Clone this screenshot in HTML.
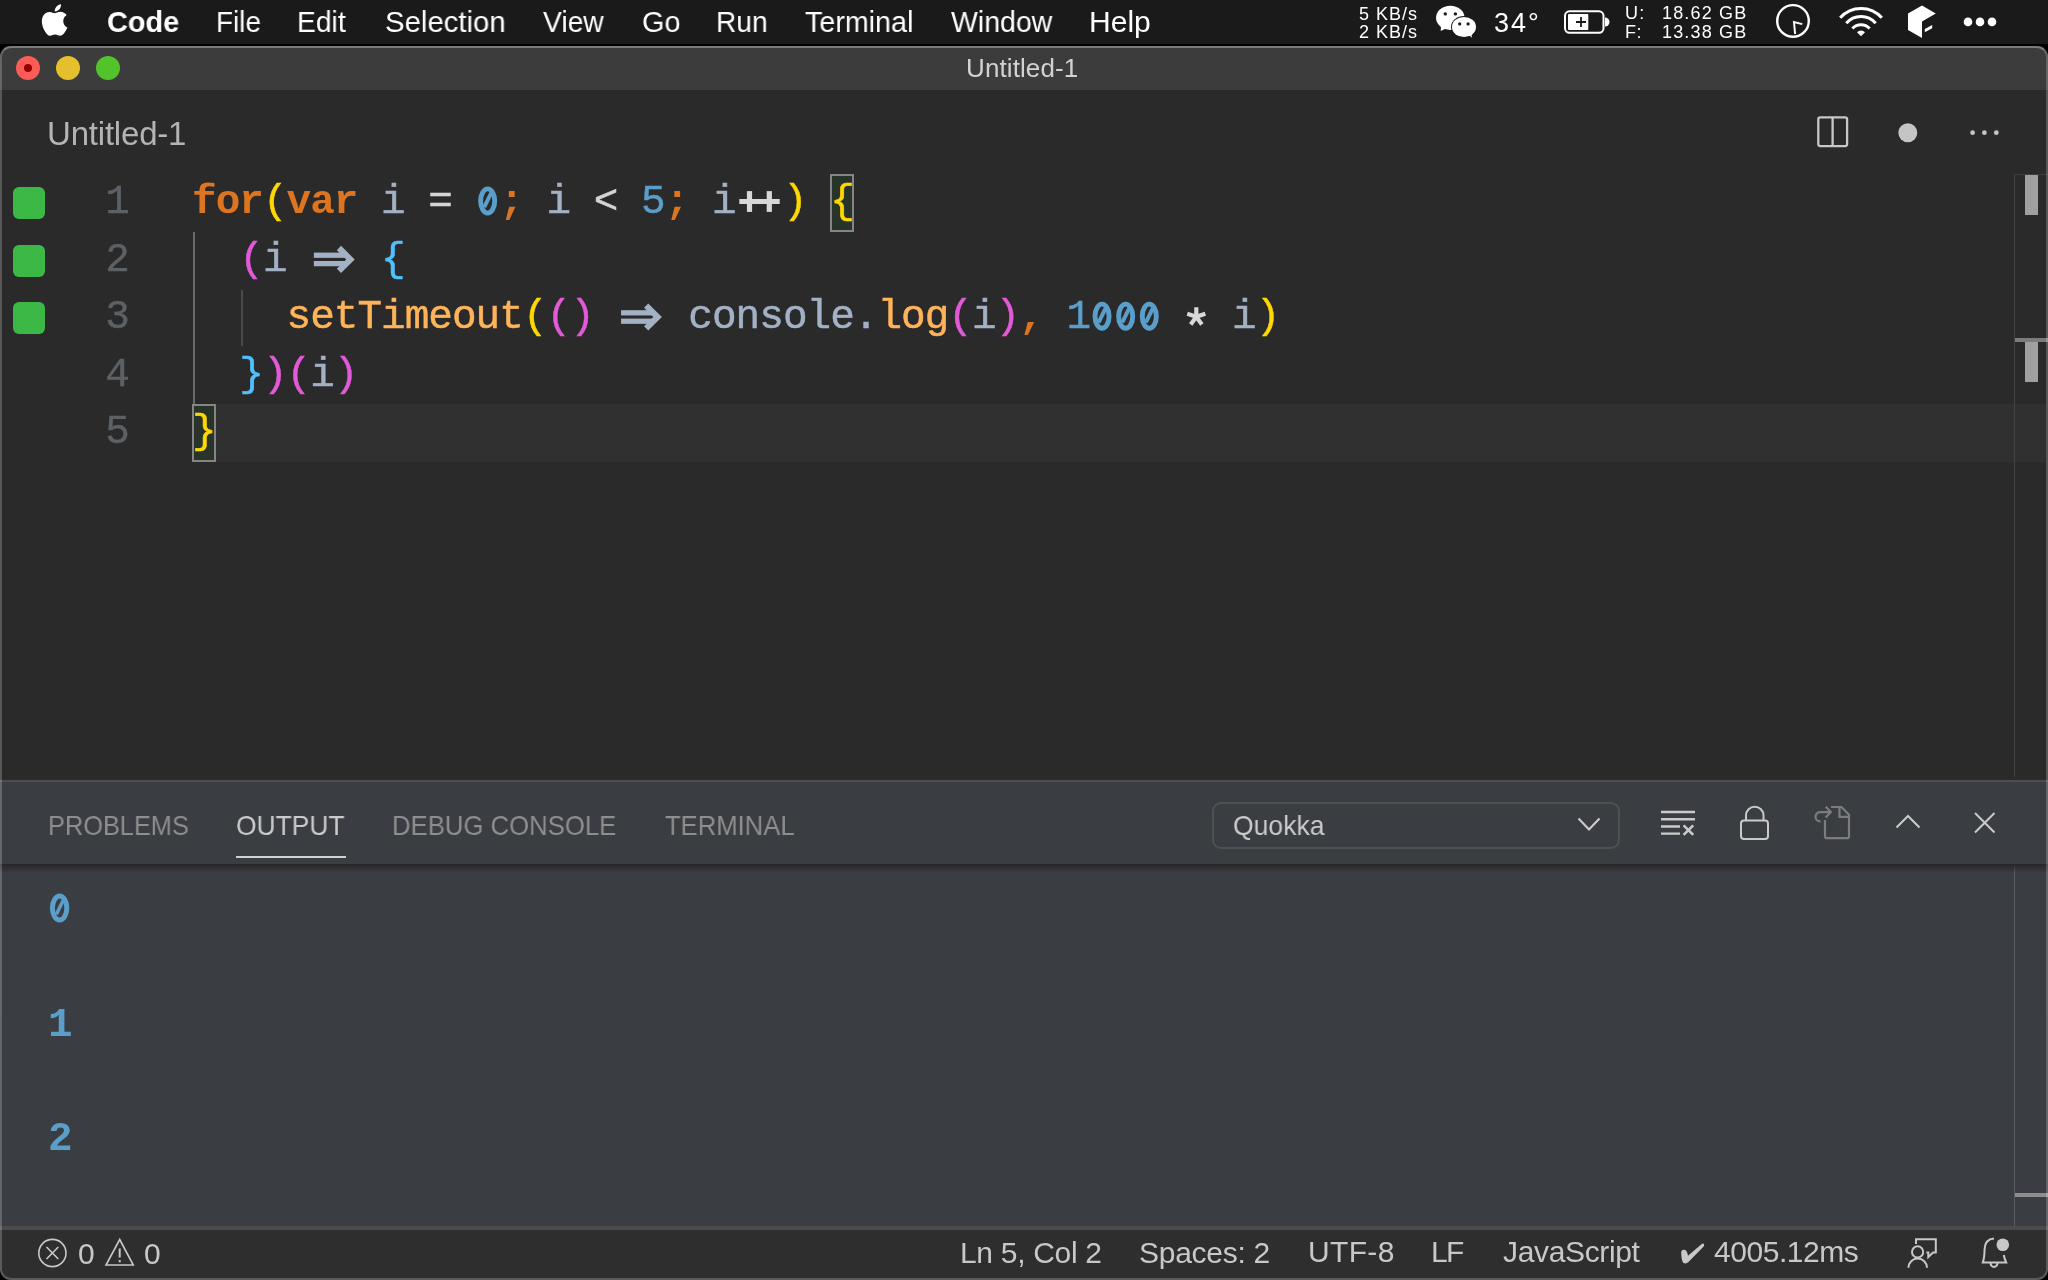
<!DOCTYPE html>
<html><head><meta charset="utf-8">
<style>
html,body{margin:0;padding:0;width:2048px;height:1280px;overflow:hidden;background:#000;}
body{position:relative;font-family:"Liberation Sans",sans-serif;}
.a{position:absolute;}
.t{position:absolute;white-space:pre;line-height:1;will-change:transform;}
#menubar{left:0;top:0;width:2048px;height:44px;background:#1a1a1a;}
.mi{color:#fff;font-size:28px;top:9px;}
.code{will-change:transform;position:absolute;left:192px;font-family:"Liberation Mono",monospace;font-size:41px;letter-spacing:-0.97px;-webkit-text-stroke:0.5px currentColor;line-height:57.6px;height:57.6px;white-space:pre;color:#a3b1c5;}
.ln{will-change:transform;position:absolute;left:59px;width:70px;text-align:right;font-family:"Liberation Mono",monospace;font-size:41px;letter-spacing:-0.97px;-webkit-text-stroke:0.4px currentColor;line-height:57.6px;height:57.6px;color:#5c6166;}
.gs{position:absolute;left:13px;width:32px;height:32px;border-radius:6px;background:#3cb847;}
.k{color:#dd7420;font-weight:bold;-webkit-text-stroke:0}.ast{position:relative;top:8px;font-weight:bold;-webkit-text-stroke:0}.o{font-weight:bold;-webkit-text-stroke:0}.y{color:#ffd702}.m{color:#e35ad9}.c{color:#4fc1ff}.n{color:#5a9ec9}.w{color:#d4d4d4}.f{color:#ffb45a}.o{color:#dd7420}
.ptab{font-size:27px;top:813px;color:#8e8e8e;}
.sb{font-size:28px;top:1241px;color:#c8c8c8;}
.ic{position:absolute;overflow:visible;}
</style></head>
<body>
<div id="menubar" class="a">
  <svg class="ic" style="left:41.3px;top:4px" width="27" height="32" viewBox="0 0 27 32"><path fill="#fff" d="M22.3 17c0-4 3.3-5.9 3.4-6-1.9-2.7-4.8-3.1-5.8-3.1-2.5-.3-4.8 1.4-6.1 1.4-1.3 0-3.2-1.4-5.2-1.3C5.9 8 3.5 9.5 2.2 11.8c-2.8 4.8-.7 12 2 15.9 1.300 1.900 2.900 4.100 4.900 4 2-.1 2.700-1.300 5.100-1.300 2.400 0 3.100 1.300 5.100 1.300 2.100 0 3.500-1.900 4.800-3.900 1.500-2.200 2.100-4.300 2.200-4.400-.1 0-4-1.600-4-6.400zM18.4 5.3c1.1-1.3 1.8-3.2 1.6-5-1.6.1-3.5 1.1-4.6 2.4-1 1.2-1.9 3-1.7 4.8 1.8.1 3.6-.9 4.7-2.2z"/></svg>
  <!-- status items -->
  <svg class="ic" style="left:0;top:0" width="2048" height="44">
    <!-- wechat -->
    <g fill="#fff">
      <ellipse cx="1450.3" cy="17.8" rx="14.3" ry="12.1"/>
      <path d="M1441 26 L1440.7 31 L1447 28 Z"/>
    </g>
    <ellipse cx="1464" cy="27" rx="13" ry="11.1" fill="#1a1a1a"/>
    <g fill="#fff">
      <ellipse cx="1464" cy="27" rx="12" ry="10.1"/>
      <path d="M1469 35 L1471.8 37.8 L1471.5 33 Z"/>
    </g>
    <g fill="#1a1a1a">
      <circle cx="1445.3" cy="13.9" r="1.7"/><circle cx="1455.4" cy="13.9" r="1.7"/>
      <circle cx="1459.7" cy="23.9" r="1.6"/><circle cx="1468.1" cy="23.9" r="1.6"/>
    </g>
    <!-- battery -->
    <rect x="1565" y="11.3" width="38.5" height="21.5" rx="4.5" fill="none" stroke="#fff" stroke-width="2"/>
    <rect x="1568" y="14" width="20.3" height="16" rx="1" fill="#fff"/>
    <path d="M1605 17.5 a4.5 4.5 0 0 1 0 9 z" fill="#fff"/>
    <path d="M1581 17 v10 M1576 22 h10" stroke="#1a1a1a" stroke-width="1.8"/>
    <!-- clock -->
    <circle cx="1793" cy="20.9" r="15.8" fill="none" stroke="#fff" stroke-width="2.4"/>
    <path d="M1802.3 24.1 L1794 22 L1795.1 34" fill="none" stroke="#fff" stroke-width="2"/>
    <!-- wifi -->
    <g fill="none" stroke="#fff" stroke-width="3" stroke-linecap="butt">
      <path d="M1840.2 17.8 A27.8 27.8 0 0 1 1881.8 17.8"/>
      <path d="M1846.3 23.2 A19.5 19.5 0 0 1 1875.7 23.2"/>
      <path d="M1852.4 28.4 A11.7 11.7 0 0 1 1869.6 28.4"/>
    </g>
    <path d="M1857 32.3 A5.5 5.5 0 0 1 1865 32.3 L1861 36.2 Z" fill="#fff"/>
    <!-- box -->
    <path d="M1922 5.6 L1935.8 13.6 L1922 21.5 L1922 38 L1908 30 L1908 13.4 Z" fill="#fff"/>
    <path d="M1924.8 29 L1932.2 25 L1932.2 28.2 L1924.8 32.2 Z" fill="#fff"/>
    <!-- dots -->
    <circle cx="1968" cy="21.9" r="4.3" fill="#fff"/><circle cx="1980" cy="21.9" r="4.3" fill="#fff"/><circle cx="1992" cy="21.9" r="4.3" fill="#fff"/>
  </svg>
</div>

<!-- window -->
<div class="a" style="left:0;top:46px;width:2048px;height:1234px;background:#2a2a2a;border-radius:11px;overflow:hidden">
  <div class="a" style="left:0;top:0;width:2048px;height:44px;background:#3c3c3c"></div>
  <!-- current line highlight -->
  <div class="a" style="left:192px;top:358px;width:1854px;height:58px;background:#303030"></div>
  <!-- overview ruler -->
  <div class="a" style="left:2014px;top:128px;width:1px;height:603px;background:#424242"></div>
  <div class="a" style="left:2025px;top:128px;width:13px;height:41px;background:#a0a0a0"></div>
  <div class="a" style="left:2025px;top:294.5px;width:13px;height:41.5px;background:#a0a0a0"></div>
  <div class="a" style="left:2015px;top:291.5px;width:33px;height:4px;background:#7c7c7c"></div>
  <div class="a" style="left:2014px;top:128px;width:34px;height:1px;background:#3e3e3e"></div>
  <!-- panel -->
  <div class="a" style="left:0;top:734px;width:2048px;height:2px;background:#4d4e50"></div>
  <div class="a" style="left:0;top:736px;width:2048px;height:444px;background:#3a3d41"></div>
  <div class="a" style="left:2014px;top:818px;width:1px;height:362px;background:#5a5d61"></div>
  <div class="a" style="left:0;top:818px;width:2048px;height:9px;background:linear-gradient(#262626,rgba(58,61,65,0))"></div>
  <div class="a" style="left:2015px;top:1147px;width:33px;height:4px;background:#8e8e8e"></div>
  <div class="a" style="left:0;top:1180px;width:2048px;height:4px;background:#4b4b4b"></div>
  <div class="a" style="left:0;top:1184px;width:2048px;height:50px;background:#2e2e2e"></div>
</div>
<!-- window border -->
<div class="a" style="left:0;top:46px;width:2044px;height:1230px;border:2px solid rgba(255,255,255,0.21);border-top-color:rgba(255,255,255,0.33);border-radius:11px;pointer-events:none"></div>

<!-- traffic lights -->
<div class="a" style="left:16px;top:56px;width:24px;height:24px;border-radius:50%;background:#fe5c56"></div>
<div class="a" style="left:24px;top:64px;width:8px;height:8px;border-radius:50%;background:#950000"></div>
<div class="a" style="left:56px;top:56px;width:24px;height:24px;border-radius:50%;background:#e6c02c"></div>
<div class="a" style="left:96px;top:56px;width:24px;height:24px;border-radius:50%;background:#53c32c"></div>

<!-- tab -->
<svg class="ic" style="left:0;top:0" width="2048" height="200">
  <rect x="1818.3" y="117.3" width="28.8" height="28.8" rx="2" fill="none" stroke="#c8c8c8" stroke-width="2.3"/>
  <path d="M1832.6 117.3 v28.8" stroke="#c8c8c8" stroke-width="2.3"/>
  <circle cx="1907.8" cy="132.7" r="9.5" fill="#c5c5c5"/>
  <circle cx="1972.6" cy="132.7" r="2.4" fill="#c5c5c5"/><circle cx="1984.4" cy="132.7" r="2.4" fill="#c5c5c5"/><circle cx="1996.3" cy="132.7" r="2.4" fill="#c5c5c5"/>
</svg>

<!-- editor -->
<div class="a" style="left:192.5px;top:232px;width:2px;height:172px;background:#6a6a6a"></div>
<div class="a" style="left:240.5px;top:290px;width:2px;height:56px;background:#4a4a4a"></div>
<div class="a" style="left:192px;top:404px;width:20px;height:54px;border:2px solid #858585;background:#28332a"></div>
<div class="a" style="left:830px;top:174px;width:20px;height:54px;border:2px solid #858585;background:#28332a"></div>
<div class="ln" style="top:174px">1</div>
<div class="ln" style="top:231.6px">2</div>
<div class="ln" style="top:289.2px">3</div>
<div class="ln" style="top:346.8px">4</div>
<div class="ln" style="top:404.4px">5</div>
<div class="gs" style="top:187px"></div>
<div class="gs" style="top:244.6px"></div>
<div class="gs" style="top:302.2px"></div>
<svg class="ic" style="left:0;top:0" width="2048" height="480">
  <g fill="#a3b1c5">
    <rect x="313.85" y="252.6" width="31" height="5.25"/><rect x="313.85" y="261" width="31" height="5.25"/>
    <rect x="621.05" y="310.2" width="31" height="5.25"/><rect x="621.05" y="318.6" width="31" height="5.25"/>
  </g>
  <g fill="none" stroke="#a3b1c5" stroke-width="6" stroke-linejoin="miter">
    <path d="M338.95 248 L350.45 259.4 L338.95 270.8"/>
    <path d="M646.15 305.6 L657.65 317 L646.15 328.4"/>
  </g>
  <g fill="#d8d8d8">
    <rect x="739.3" y="199" width="40.4" height="5"/>
    <rect x="746.9" y="191.1" width="5.2" height="20.8"/><rect x="766.7" y="191.1" width="5.2" height="20.8"/>
  </g>
</svg>
<div class="code" style="top:174px"><span class="k">for</span><span class="y">(</span><span class="k">var</span> i <span class="w">=</span> <span class="n"> </span><span class="o">;</span> i <span class="w">&lt;</span> <span class="n">5</span><span class="o">;</span> i  <span class="y">)</span> <span class="y">{</span></div>
<div class="code" style="top:231.6px">  <span class="m">(</span>i    <span class="c">{</span></div>
<div class="code" style="top:289.2px">    <span class="f">setTimeout</span><span class="y">(</span><span class="m">()</span>    console.<span class="f">log</span><span class="m">(</span>i<span class="m">)</span><span class="o">,</span> <span class="n">1   </span>   i<span class="y">)</span></div>
<div class="code" style="top:346.8px">  <span class="c">}</span><span class="m">)(</span>i<span class="m">)</span></div>
<div class="code" style="top:404.4px"><span class="y">}</span></div>

<!-- panel header -->
<div class="a" style="left:236px;top:856px;width:110px;height:2px;background:#d0d0d0"></div>
<div class="a" style="left:1212px;top:802px;width:404px;height:43px;border:2px solid #4f5052;border-radius:9px"></div>
<svg class="ic" style="left:0;top:780px" width="2048" height="80">
  <path d="M1578.5 38.5 L1589 49.5 L1599.5 38.5" fill="none" stroke="#cacaca" stroke-width="2.2"/>
  <g stroke="#cacaca" stroke-width="2" fill="none">
    <path d="M1661 32 h34 M1661 39.3 h34 M1661 46.5 h19 M1661 53.6 h19" stroke-width="2.4"/><path d="M1683.6 45.3 l9.6 9.6 M1693.2 45.3 l-9.6 9.6" stroke-width="2.6"/>
    <rect x="1741" y="40.5" width="27" height="18.5" rx="3"/>
    <path d="M1746 40.5 v-5 a8.75 8.75 0 0 1 17.5 0 v5"/>
    <path d="M1896.5 47.5 L1908 36 L1919.5 47.5"/>
    <path d="M1975 33 L1994.5 52.5 M1994.5 33 L1975 52.5"/>
  </g>
  <g stroke="#7c7c7c" stroke-width="2.2" fill="none" transform="translate(0,-780)">
    <path d="M1825 820 V836.2 a2 2 0 0 0 2 2 H1847 a2 2 0 0 0 2 -2 V814.6 L1841.4 807 H1831"/>
    <path d="M1839.5 807 V816.9 H1849"/>
    <path d="M1820.5 821.4 A4.65 4.65 0 0 1 1819.8 812.1 H1830"/>
    <path d="M1825.7 806.7 L1830.8 812.1 L1825.7 817.5"/>
  </g>
</svg>

<!-- output -->

<div class="code" style="left:48px;top:996.6px;color:#5a9ec9;font-weight:bold;-webkit-text-stroke:0">1</div>
<div class="code" style="left:48px;top:1111.4px;color:#5a9ec9;font-weight:bold;-webkit-text-stroke:0">2</div>

<svg class="ic" style="left:0;top:0" width="2048" height="1000"><g fill="none" stroke="#5a9ec9" transform="translate(0,0.6)">
  <ellipse cx="487.66" cy="200.40" rx="7.05" ry="12.1" stroke-width="4.9"/><path d="M484.26 206.60 L491.26 192.30" stroke-width="4"/>
  <ellipse cx="1102.04" cy="315.60" rx="7.05" ry="12.1" stroke-width="4.9"/><path d="M1098.64 321.80 L1105.64 307.50" stroke-width="4"/>
  <ellipse cx="1125.67" cy="315.60" rx="7.05" ry="12.1" stroke-width="4.9"/><path d="M1122.27 321.80 L1129.27 307.50" stroke-width="4"/>
  <ellipse cx="1149.30" cy="315.60" rx="7.05" ry="12.1" stroke-width="4.9"/><path d="M1145.90 321.80 L1152.90 307.50" stroke-width="4"/>
  <ellipse cx="59.6" cy="907.50" rx="7.2" ry="12.0" stroke-width="5"/><path d="M56.40 913.70 L63.40 899.40" stroke-width="3.6"/>
</g></svg>
<svg class="ic" style="left:0;top:0" width="2048" height="480"><path d="M1196.30 316.80 L1196.30 307.30 M1196.30 316.80 L1205.34 313.86 M1196.30 316.80 L1187.26 313.86 M1196.30 316.80 L1201.88 324.49 M1196.30 316.80 L1190.72 324.49" stroke="#d8d8d8" stroke-width="4.2" fill="none"/></svg>
<!-- status bar -->
<svg class="ic" style="left:0;top:1230px" width="2048" height="50">
  <g stroke="#c8c8c8" stroke-width="1.6" fill="none">
    <circle cx="52.4" cy="23" r="13.6"/>
    <path d="M46.5 17 L58.3 29 M58.3 17 L46.5 29"/>
    <path d="M119.7 9.5 L133.3 35 L106 35 Z"/>
  </g>
  <path d="M119.7 18.5 v9 M119.7 30 v2.3" stroke="#c8c8c8" stroke-width="2"/>
  <g stroke="#c8c8c8" stroke-width="2" fill="none">
    <circle cx="1917.6" cy="21.9" r="5.6"/>
    <path d="M1908.4 37.8 A9.3 9.3 0 0 1 1927 37.8"/>
    <path d="M1916 14 V9.2 H1935.8 V22.6 H1933 L1928.3 27.2 V22.6 H1926.4"/>
    <path d="M1994 8.5 C1988 9 1984.8 13 1984.6 19 C1984.5 26 1984 29 1982.8 32.5 H2006.2 C2005 30 2004.2 28 2003.8 25 M1990.6 33.5 a3.4 3.4 0 0 0 6.8 0"/>
  </g>
  <circle cx="2002.8" cy="14.8" r="6.3" fill="#c8c8c8"/>
  <path d="M1681.2 1253 Q1681 1249.5 1684.5 1249.7 Q1687 1250 1688 1255.8 L1702 1243.8 Q1704.6 1242.4 1704.1 1246 L1688.5 1262 Q1686 1264.3 1683.5 1263 Q1681.5 1261 1681.2 1253 Z" transform="translate(0,-1230)" fill="#c8c8c8"/>
</svg>
<div class="t" id="m_code" style="left:107.20px;top:6.90px;font-size:29.5px;color:#ffffff;letter-spacing:0.000px;font-weight:bold;transform:scaleX(0.9801);transform-origin:0 0;">Code</div>
<div class="t" id="m_file" style="left:216.00px;top:7.30px;font-size:29.5px;color:#ffffff;letter-spacing:0.000px;transform:scaleX(0.9444);transform-origin:0 0;">File</div>
<div class="t" id="m_edit" style="left:297.00px;top:7.30px;font-size:29.5px;color:#ffffff;letter-spacing:0.000px;transform:scaleX(0.9563);transform-origin:0 0;">Edit</div>
<div class="t" id="m_sel" style="left:384.60px;top:7.30px;font-size:29.5px;color:#ffffff;letter-spacing:0.000px;transform:scaleX(0.9941);transform-origin:0 0;">Selection</div>
<div class="t" id="m_view" style="left:543.00px;top:7.30px;font-size:29.5px;color:#ffffff;letter-spacing:0.000px;transform:scaleX(0.9581);transform-origin:0 0;">View</div>
<div class="t" id="m_go" style="left:642.00px;top:7.30px;font-size:29.5px;color:#ffffff;letter-spacing:0.000px;transform:scaleX(0.9771);transform-origin:0 0;">Go</div>
<div class="t" id="m_run" style="left:716.00px;top:7.30px;font-size:29.5px;color:#ffffff;letter-spacing:0.000px;transform:scaleX(0.9544);transform-origin:0 0;">Run</div>
<div class="t" id="m_term" style="left:804.60px;top:7.30px;font-size:29.5px;color:#ffffff;letter-spacing:0.000px;transform:scaleX(0.9722);transform-origin:0 0;">Terminal</div>
<div class="t" id="m_win" style="left:950.60px;top:7.30px;font-size:29.5px;color:#ffffff;letter-spacing:0.000px;transform:scaleX(0.9658);transform-origin:0 0;">Window</div>
<div class="t" id="m_help" style="left:1088.80px;top:7.30px;font-size:29.5px;color:#ffffff;letter-spacing:0.000px;transform:scaleX(1.0192);transform-origin:0 0;">Help</div>
<div class="t" id="kb1" style="left:1359.00px;top:5.20px;font-size:18px;color:#ffffff;letter-spacing:0.990px;">5 KB/s</div>
<div class="t" id="kb2" style="left:1359.00px;top:22.60px;font-size:18px;color:#ffffff;letter-spacing:0.990px;">2 KB/s</div>
<div class="t" id="temp" style="left:1494.00px;top:9.80px;font-size:27px;color:#ffffff;letter-spacing:2.025px;">34°</div>
<div class="t" id="du" style="left:1625.20px;top:4.40px;font-size:18px;color:#ffffff;letter-spacing:1.350px;">U:</div>
<div class="t" id="df" style="left:1625.20px;top:22.60px;font-size:18px;color:#ffffff;letter-spacing:0.450px;">F:</div>
<div class="t" id="dv1" style="left:1661.60px;top:4.40px;font-size:18px;color:#ffffff;letter-spacing:1.157px;">18.62 GB</div>
<div class="t" id="dv2" style="left:1661.60px;top:22.60px;font-size:18px;color:#ffffff;letter-spacing:1.157px;">13.38 GB</div>
<div class="t" id="title" style="left:966.00px;top:54.80px;font-size:26px;color:#d2d2d2;letter-spacing:0.100px;">Untitled-1</div>
<div class="t" id="tab" style="left:47.40px;top:116.80px;font-size:33px;color:#b4b4b4;letter-spacing:-0.200px;">Untitled-1</div>
<div class="t" id="p_prob" style="left:47.60px;top:811.74px;font-size:28px;color:#8e8e8e;letter-spacing:0.000px;transform:scaleX(0.9052);transform-origin:0 0;">PROBLEMS</div>
<div class="t" id="p_out" style="left:236.00px;top:811.74px;font-size:28px;color:#cacaca;letter-spacing:0.000px;transform:scaleX(0.9432);transform-origin:0 0;">OUTPUT</div>
<div class="t" id="p_dbg" style="left:392.00px;top:811.74px;font-size:28px;color:#8e8e8e;letter-spacing:0.000px;transform:scaleX(0.9184);transform-origin:0 0;">DEBUG CONSOLE</div>
<div class="t" id="p_term" style="left:665.20px;top:811.74px;font-size:28px;color:#8e8e8e;letter-spacing:0.000px;transform:scaleX(0.9158);transform-origin:0 0;">TERMINAL</div>
<div class="t" id="quokka" style="left:1233.40px;top:811.74px;font-size:28px;color:#cacaca;letter-spacing:0.000px;transform:scaleX(0.9476);transform-origin:0 0;">Quokka</div>
<div class="t" id="s_e" style="left:78.00px;top:1239.40px;font-size:30px;color:#c8c8c8;letter-spacing:0.000px;">0</div>
<div class="t" id="s_w" style="left:144.20px;top:1239.40px;font-size:30px;color:#c8c8c8;letter-spacing:0.000px;">0</div>
<div class="t" id="s_ln" style="left:959.60px;top:1237.50px;font-size:30px;color:#c8c8c8;letter-spacing:-0.315px;">Ln 5, Col 2</div>
<div class="t" id="s_sp" style="left:1139.40px;top:1237.50px;font-size:30px;color:#c8c8c8;letter-spacing:-0.281px;">Spaces: 2</div>
<div class="t" id="s_utf" style="left:1307.80px;top:1237.40px;font-size:30px;color:#c8c8c8;letter-spacing:0.338px;">UTF-8</div>
<div class="t" id="s_lf" style="left:1431.20px;top:1237.40px;font-size:30px;color:#c8c8c8;letter-spacing:-1.800px;">LF</div>
<div class="t" id="s_js" style="left:1503.40px;top:1237.40px;font-size:30px;color:#c8c8c8;letter-spacing:-0.350px;">JavaScript</div>
<div class="t" id="s_ms" style="left:1714.00px;top:1237.40px;font-size:30px;color:#c8c8c8;letter-spacing:-0.450px;">4005.12ms</div>
</body></html>
